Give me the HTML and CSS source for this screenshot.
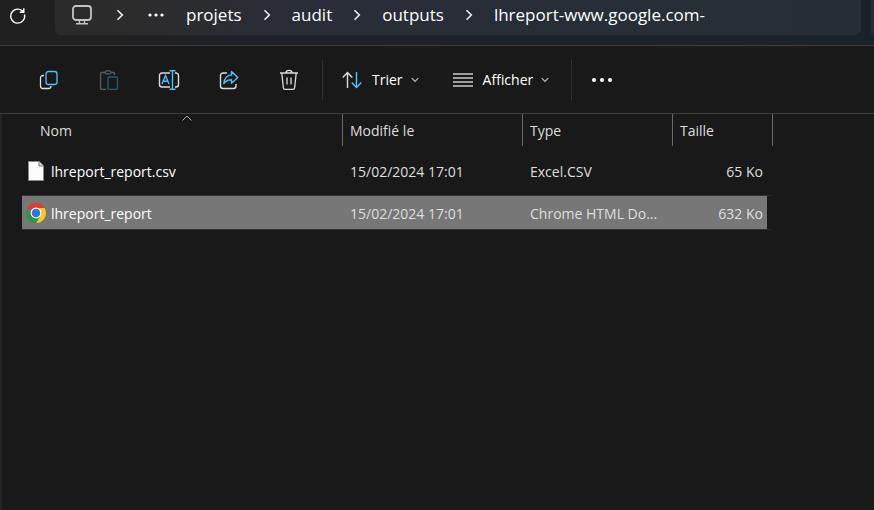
FILE: index.html
```html
<!DOCTYPE html>
<html lang="fr">
<head>
<meta charset="utf-8">
<meta name="viewport" content="width=device-width, initial-scale=1">
<title>outputs</title>
<link rel="stylesheet" href="styles.css">
</head>
<body>
<header class="topbar">
  <button class="refresh" aria-label="Actualiser">
    <svg width="18" height="18" viewBox="0 0 18 18" fill="none" stroke="#fff" stroke-width="1.4"><path d="M15.500 7.500A7 7 0 1 1 13 3.600L14.600 5M14.800 1.200V5.200H10.800"/></svg>
  </button>
  <nav class="address" aria-label="Chemin">
    <button class="device" aria-label="Ce PC">
      <svg width="20" height="20" viewBox="0 0 20 20" fill="none" stroke="#c4c4c4" stroke-width="1.8"><rect x="1" y="1" width="18" height="14" rx="3"/><path d="M7.500 15v3.500M12.500 15v3.500M4 18.700h12" stroke-width="1.400"/></svg>
    </button>
    <svg class="chevron" width="8" height="12" viewBox="0 0 8 12"><path d="M1.500 1.200L6.300 6l-4.800 4.800"/></svg>
    <button class="overflow" aria-label="Dossiers parents">
      <svg width="16" height="4" viewBox="0 0 16 4" fill="#fff"><circle cx="2" cy="2" r="1.600"/><circle cx="8" cy="2" r="1.600"/><circle cx="14" cy="2" r="1.600"/></svg>
    </button>
    <a href="#">projets</a>
    <svg class="chevron" width="8" height="12" viewBox="0 0 8 12"><path d="M1.500 1.200L6.300 6l-4.800 4.800"/></svg>
    <a href="#">audit</a>
    <svg class="chevron" width="8" height="12" viewBox="0 0 8 12"><path d="M1.500 1.200L6.300 6l-4.800 4.800"/></svg>
    <a href="#">outputs</a>
    <svg class="chevron" width="8" height="12" viewBox="0 0 8 12"><path d="M1.500 1.200L6.300 6l-4.800 4.800"/></svg>
    <a href="#">lhreport-www.google.com-</a>
  </nav>
  <div class="search"></div>
</header>

<div class="toolbar" role="toolbar" aria-label="Commandes">
  <div class="icons">
    <button aria-label="Copier">
      <svg width="20" height="20" viewBox="0 0 20 20" fill="none" stroke-width="1.300"><path stroke="#ddd" d="M5 5.500H4A2.500 2.500 0 0 0 1.500 8v8A2.500 2.500 0 0 0 4 18.500h5.500A2.500 2.500 0 0 0 12 16"/><rect stroke="#4cc2ff" x="7" y="1.500" width="11" height="13" rx="2.500"/></svg>
    </button>
    <button aria-label="Coller" disabled>
      <svg width="20" height="20" viewBox="0 0 20 20" fill="none" stroke-width="1.300"><path stroke="#5c5c5c" d="M6 2.500H2.600a1 1 0 0 0-1 1v14.900a1 1 0 0 0 1 1H7M12 2.500h2.500a1 1 0 0 1 1 1V5"/><rect stroke="#5c5c5c" x="6" y=".9" width="6" height="3" rx="1.500"/><rect stroke="#285a73" x="9" y="7" width="9.500" height="12.400" rx="1"/></svg>
    </button>
    <button aria-label="Renommer">
      <svg width="22" height="20" viewBox="0 0 22 20" fill="none" stroke-width="1.400"><path stroke="#ddd" d="M12 3H4a2.500 2.500 0 0 0-2.500 2.500v9A2.500 2.500 0 0 0 4 17h8M17 3h.5A2.500 2.500 0 0 1 20.500 5.500v9A2.500 2.500 0 0 1 18 17h-1"/><path stroke="#4cc2ff" d="M4 14L7.500 5.500 11 14M5.200 11.300h4.600M11.500 .8h6M14.500 .8v18.400M11.500 19.200h6"/></svg>
    </button>
    <button aria-label="Partager">
      <svg width="20" height="20" viewBox="0 0 20 20" fill="none" stroke-width="1.400" stroke-linejoin="round"><path stroke="#ddd" d="M8 3H4a2.500 2.500 0 0 0-2.500 2.500V16A2.500 2.500 0 0 0 4 18.500h10.500A2.500 2.500 0 0 0 17 16v-2"/><path stroke="#4cc2ff" d="M12.500 1.500l6.300 6-6.300 5.700V9.800C9 9.800 6.800 11 4.800 13.500 5.300 8.500 8 5.300 12.500 4.900z"/></svg>
    </button>
    <button aria-label="Supprimer">
      <svg width="20" height="22" viewBox="0 0 20 22" fill="none" stroke="#ddd" stroke-width="1.300"><path d="M1 4h18M7 4a3 2.600 0 0 1 6 0M2.800 4l1.500 14.500a2 2 0 0 0 2 1.900h7.400a2 2 0 0 0 2-1.900L17.200 4M8 8.500v7M12 8.500v7"/></svg>
    </button>
  </div>
  <div class="menus">
    <button>
      <svg width="20" height="18" viewBox="0 0 20 18" fill="none" stroke-width="1.400"><path stroke="#ddd" d="M5.500 17V1.500M.7 6.500l4.800-5 4.800 5"/><path stroke="#4cc2ff" d="M14.500 1v15.500M9.700 11.500l4.800 5 4.800-5"/></svg>
      <span>Trier</span>
      <svg class="down" width="8" height="6" viewBox="0 0 8 6"><path d="M.8 1.200L4 4.400l3.200-3.200"/></svg>
    </button>
    <button>
      <svg width="20" height="14" viewBox="0 0 20 14" fill="none" stroke="#ccc" stroke-width="1.300"><path d="M0 1h20M0 5h20M0 9h20M0 13h20"/></svg>
      <span>Afficher</span>
      <svg class="down" width="8" height="6" viewBox="0 0 8 6"><path d="M.8 1.200L4 4.400l3.200-3.200"/></svg>
    </button>
  </div>
  <button class="more" aria-label="Plus">
    <svg width="20" height="4" viewBox="0 0 20 4" fill="#fff"><circle cx="2" cy="2" r="2"/><circle cx="10" cy="2" r="2"/><circle cx="18" cy="2" r="2"/></svg>
  </button>
</div>

<main class="content">
  <table class="files">
    <colgroup><col class="c-name"><col class="c-date"><col class="c-type"><col class="c-size"></colgroup>
    <thead>
      <tr>
        <th class="sorted" aria-sort="ascending">Nom<svg class="sort" width="10" height="6" viewBox="0 0 10 6" fill="none" stroke="#aaa"><path d="M.5 5.500L5 1l4.500 4.500"/></svg></th>
        <th>Modifié le</th><th>Type</th><th>Taille</th>
      </tr>
    </thead>
    <tbody>
      <tr>
        <td><span class="file"><svg width="20" height="20" viewBox="0 0 20 20"><path d="M2.500 .5H13l4.500 4.500v14.500h-15z" fill="#fcfcfc" stroke="#8a8a8a"/><path d="M13 .5V5h4.500" fill="#ddd" stroke="#777"/></svg>lhreport_report.csv</span></td>
        <td>15/02/2024 17:01</td><td>Excel.CSV</td><td>65 Ko</td>
      </tr>
      <tr class="selected" aria-selected="true">
        <td><span class="file"><svg width="20" height="20" viewBox="0 0 20 20"><path fill="#e33b2e" d="M10 10L1.340 5A10 10 0 0 1 18.660 5H10z"/><path fill="#fcc91f" d="M10 5h8.660A10 10 0 0 1 10 20l4.330-7.500z"/><path fill="#279847" d="M1.340 5A10 10 0 0 0 10 20l4.330-7.500L10 10l-4.330 2.500z"/><circle cx="10" cy="10" r="5.400" fill="#fff"/><circle cx="10" cy="10" r="4.300" fill="#2a78e8"/></svg>lhreport_report</span></td>
        <td>15/02/2024 17:01</td><td>Chrome HTML Do...</td><td>632 Ko</td>
      </tr>
    </tbody>
  </table>
</main>
</body>
</html>
```
FILE: styles.css
```css
* { box-sizing: border-box; }

body {
  margin: 0;
  min-height: 100vh;
  display: flex;
  flex-direction: column;
  background: #191919;
  color: #fff;
  font: 14px/20px "Open Sans", "Noto Sans", sans-serif;
}

button {
  display: flex;
  align-items: center;
  justify-content: center;
  padding: 0;
  border: 0;
  background: none;
  color: inherit;
  font: inherit;
}

svg { display: block; flex: none; }

.topbar {
  display: flex;
  height: 46px;
  border-bottom: 1px solid #404040;
  background: linear-gradient(90deg, #202020 0%, #202022 18%, #1c202b 34%, #1b212b 60%, #1a2229 100%);
}

.refresh { width: 35px; height: 32px; margin-right: 20px; }

.address {
  flex: 1;
  display: flex;
  align-items: center;
  height: 35px;
  padding: 0 0 6px 17px;
  border-radius: 0 0 6px 6px;
  background: linear-gradient(90deg, #2b2b2b 0%, #2c2c2e 14%, #292d37 30%, #272e37 65%, #262e35 100%);
  font-size: 17px;
  line-height: 24px;
}

.address a { color: #fff; text-decoration: none; white-space: nowrap; }

.chevron {
  margin: 0 21px;
  fill: none;
  stroke: #eee;
  stroke-width: 1.6;
}

.device { width: 20px; }
.device + .chevron { margin: 0 24px; }
.overflow { width: 16px; margin-right: 22px; }

.search {
  width: 3px;
  height: 35px;
  margin-left: 10px;
  border-radius: 0 0 0 6px;
  background: #262e35;
}

.toolbar {
  display: flex;
  align-items: center;
  height: 68px;
  border-bottom: 1px solid #404040;
}

.icons { display: flex; padding-left: 19px; }
.icons button { width: 60px; height: 40px; }

.menus {
  display: flex;
  align-items: center;
  gap: 34px;
  height: 40px;
  margin-left: 3px;
  padding: 0 22px 0 19px;
  border: 1px solid #303030;
  border-width: 0 1px;
}

.menus span { margin: 0 8px 0 10px; }
.down { fill: none; stroke: #bbb; stroke-width: 1.2; }
.more { width: 60px; height: 40px; }

.content {
  flex: 1;
  padding-left: 20px;
  border-left: 2px solid #222;
}

.files {
  table-layout: fixed;
  width: 751px;
  margin-top: -7px;
  border-spacing: 0 7px;
}

.c-name { width: 321px; }
.c-date { width: 180px; }
.c-type { width: 150px; }
.c-size { width: 100px; }

th {
  height: 32px;
  padding: 1px 7px 0;
  border-right: 1px solid #686868;
  color: #dedede;
  font-weight: 400;
  text-align: left;
}

.sorted { position: relative; padding-left: 18px; }
.sort { position: absolute; top: 1px; left: 50%; }

td {
  height: 35px;
  padding: 3px 7px 0;
  border: 1px solid transparent;
  border-width: 1px 0;
  color: #dedede;
  white-space: nowrap;
}

td:first-child { padding-left: 4px; color: #fff; }

td:last-child {
  padding-right: 4px;
  border-right: 6px solid #191919;
  text-align: right;
}

.file { display: flex; align-items: center; gap: 5px; }
.file svg { margin-top: -3px; }

.selected td {
  border-top-color: #333;
  border-bottom-color: #333;
  background: #777;
}

.selected td:last-child { background-clip: padding-box; }
```
